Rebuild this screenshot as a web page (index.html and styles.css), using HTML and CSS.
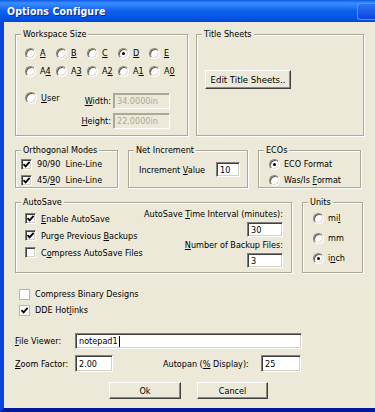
FILE: index.html
```html
<!DOCTYPE html>
<html>
<head>
<meta charset="utf-8">
<link rel="stylesheet" href="styles.css">
</head>
<body>
<div class="window">
  <div class="titlebar">
    <span class="title">Options Configure</span>
    <span class="tb-btn"></span>
  </div>
  <div class="client">
    <div class="row row-top">
      <div class="group g-workspace">
        <div class="legend">Workspace Size</div>
        <div class="radio-grid">
          <div class="opt"><span class="radio"></span><span><u>A</u></span></div>
          <div class="opt"><span class="radio"></span><span><u>B</u></span></div>
          <div class="opt"><span class="radio"></span><span><u>C</u></span></div>
          <div class="opt"><span class="radio on"></span><span><u>D</u></span></div>
          <div class="opt"><span class="radio"></span><span><u>E</u></span></div>
          <div class="opt"><span class="radio"></span><span>A<u>4</u></span></div>
          <div class="opt"><span class="radio"></span><span>A<u>3</u></span></div>
          <div class="opt"><span class="radio"></span><span>A<u>2</u></span></div>
          <div class="opt"><span class="radio"></span><span>A<u>1</u></span></div>
          <div class="opt"><span class="radio"></span><span>A<u>0</u></span></div>
        </div>
        <div class="user-row">
          <div class="opt user-opt"><span class="radio big"></span><span><u>U</u>ser</span></div>
          <span class="flabel"><u>W</u>idth:</span>
          <span class="input disabled w-dim">34.0000in</span>
        </div>
        <div class="height-row">
          <span class="flabel"><u>H</u>eight:</span>
          <span class="input disabled w-dim">22.0000in</span>
        </div>
      </div>
      <div class="group g-title">
        <div class="legend">Title Sheets</div>
        <div class="btn btn-edit">Edit Title Sheets..</div>
      </div>
    </div>

    <div class="row row-mid">
      <div class="group g-ortho">
        <div class="legend">Orthogonal Modes</div>
        <div class="stack s16">
          <div class="opt chk-opt"><span class="check on"><svg viewBox="0 0 9 9" width="9" height="9"><path d="M1.5 4.2 L3.6 6.4 L7.6 1.8" fill="none" stroke="#000" stroke-width="1.8"/></svg></span><span>90/90 &nbsp;Line-Line</span></div>
          <div class="opt chk-opt"><span class="check on"><svg viewBox="0 0 9 9" width="9" height="9"><path d="M1.5 4.2 L3.6 6.4 L7.6 1.8" fill="none" stroke="#000" stroke-width="1.8"/></svg></span><span>45/<u>9</u>0 &nbsp;Line-Line</span></div>
        </div>
      </div>
      <div class="group g-net">
        <div class="legend">Net Increment</div>
        <div class="net-row">
          <span class="net-label">Increment <u>V</u>alue</span>
          <span class="input w-net">10</span>
        </div>
      </div>
      <div class="group g-eco">
        <div class="legend">ECOs</div>
        <div class="stack s16">
          <div class="opt"><span class="radio on"></span><span>ECO Format</span></div>
          <div class="opt"><span class="radio"></span><span>Was/Is <u>F</u>ormat</span></div>
        </div>
      </div>
    </div>

    <div class="row row-auto">
      <div class="group g-auto">
        <div class="legend">AutoSave</div>
        <div class="auto-body">
          <div class="stack s17 auto-left">
            <div class="opt chk-opt"><span class="check on"><svg viewBox="0 0 9 9" width="9" height="9"><path d="M1.5 4.2 L3.6 6.4 L7.6 1.8" fill="none" stroke="#000" stroke-width="1.8"/></svg></span><span><u>E</u>nable AutoSave</span></div>
            <div class="opt chk-opt"><span class="check on"><svg viewBox="0 0 9 9" width="9" height="9"><path d="M1.5 4.2 L3.6 6.4 L7.6 1.8" fill="none" stroke="#000" stroke-width="1.8"/></svg></span><span>Purge Previous <u>B</u>ackups</span></div>
            <div class="opt chk-opt"><span class="check"></span><span>C<u>o</u>mpress AutoSave Files</span></div>
          </div>
          <div class="auto-right">
            <span class="rlabel">AutoSave <u>T</u>ime Interval (minutes):</span>
            <span class="input w-auto">30</span>
            <span class="rlabel"><u>N</u>umber of Backup Files:</span>
            <span class="input w-auto">3</span>
          </div>
        </div>
      </div>
      <div class="group g-units">
        <div class="legend">Units</div>
        <div class="stack s20">
          <div class="opt"><span class="radio"></span><span>mi<u>l</u></span></div>
          <div class="opt"><span class="radio"></span><span>mm</span></div>
          <div class="opt"><span class="radio on"></span><span>i<u>n</u>ch</span></div>
        </div>
      </div>
    </div>

    <div class="stack s16 bottom-checks">
      <div class="opt chk-opt"><span class="check flat"></span><span>Compress Binary Designs</span></div>
      <div class="opt chk-opt"><span class="check flat on"><svg viewBox="0 0 9 9" width="9" height="9"><path d="M1.5 4.2 L3.6 6.4 L7.6 1.8" fill="none" stroke="#000" stroke-width="1.8"/></svg></span><span>DDE Hot<u>l</u>inks</span></div>
    </div>

    <div class="field-row file-row">
      <span class="field-label"><u>F</u>ile Viewer:</span>
      <span class="input w-file">notepad1<span class="caret"></span></span>
    </div>
    <div class="field-row zoom-row">
      <span class="field-label"><u>Z</u>oom Factor:</span>
      <span class="input w-zoom">2.00</span>
      <span class="autopan-label">Autopan (<u>%</u> Display):</span>
      <span class="input w-pan">25</span>
    </div>

    <div class="buttons">
      <div class="btn btn-ok">Ok</div>
      <div class="btn btn-cancel">Cancel</div>
    </div>
  </div>
</div>
</body>
</html>
```

FILE: styles.css
```css
* { box-sizing: border-box; }

body {
  margin: 0;
  background: #ece9d8;
  font-family: "DejaVu Sans Condensed", "Liberation Sans", sans-serif;
  font-size: 9px;
  color: #000;
}

u { text-decoration: underline; text-underline-offset: 1px; }

.window {
  width: 375px;
  height: 412px;
  background: #ece9d8;
  display: flex;
  flex-direction: column;
  overflow: hidden;
}

.titlebar {
  height: 22px;
  flex: none;
  display: flex;
  align-items: center;
  padding-left: 7px;
  background: linear-gradient(#0a5ae6 0, #3a8dff 3px, #2a7cfb 6px, #0c61ee 11px, #0557e8 17px, #0047d4 22px);
}

.title {
  color: #fff;
  font-family: "DejaVu Sans Condensed", "Liberation Sans", sans-serif;
  font-weight: bold;
  font-size: 10.5px;
  text-shadow: 1px 1px 0 #0a2a8a;
  letter-spacing: 0.1px;
}

.tb-btn {
  margin-left: auto;
  width: 18px;
  height: 17px;
  border-radius: 3px 0 0 3px;
  background: linear-gradient(#2f74f5, #0a45dc);
  border: 1px solid #5a92f8;
  border-right: none;
}

.client {
  flex: 1;
  border-left: 4px solid #0a44dc;
  border-bottom: 4px solid #00179c;
  padding-left: 11px;
  display: flex;
  flex-direction: column;
}

.row { display: flex; flex: none; }

.group {
  --pad: 0px;
  padding-left: var(--pad);
  border: 1px solid #aca899;
  box-shadow: inset 1px 1px 0 #fff, 1px 1px 0 #fff;
}

.legend {
  width: max-content;
  height: 12px;
  line-height: 12px;
  margin: -7px 0 0 calc(5px - var(--pad));
  padding: 0 2px;
  background: #ece9d8;
  white-space: nowrap;
}

.opt {
  display: flex;
  align-items: center;
  gap: 4px;
  white-space: nowrap;
}

.chk-opt { gap: 5px; }

/* radio buttons */
.radio {
  flex: none;
  width: 11px;
  height: 11px;
  border-radius: 50%;
  background: #fff;
  border: 1px solid;
  border-color: #8a8878 #fff #fff #8a8878;
  box-shadow: inset 1px 1px 0 #5a5a50, inset -1px -1px 0 #dcdad0;
  position: relative;
}
.radio.big { width: 12px; height: 12px; }
.radio.on::after {
  content: "";
  position: absolute;
  left: 3px;
  top: 3px;
  width: 3px;
  height: 3px;
  border-radius: 50%;
  background: #000;
}

/* checkboxes */
.check {
  flex: none;
  width: 11px;
  height: 11px;
  background: #fff;
  border: 1px solid;
  border-color: #808080 #fff #fff #808080;
  box-shadow: inset 1px 1px 0 #404040, inset -1px -1px 0 #d4d0c8;
  display: flex;
  align-items: center;
  justify-content: center;
}
.check svg { display: block; }
.check.flat {
  border: 1px solid #b8b6a8;
  box-shadow: none;
}

/* inputs */
.input {
  display: flex;
  align-items: center;
  padding-left: 3px;
  height: 16px;
  background: #fff;
  border: 1px solid;
  border-color: #808080 #fff #fff #808080;
  box-shadow: inset 1px 1px 0 #404040, inset -1px -1px 0 #d4d0c8;
  white-space: nowrap;
  flex: none;
}
.input.disabled {
  background: #ece9d8;
  color: #aca899;
  border-color: #aca899 #fff #fff #aca899;
  box-shadow: inset 1px 1px 0 #aca899;
}

.caret {
  display: inline-block;
  width: 1px;
  height: 11px;
  background: #000;
  margin-left: 1px;
}

/* buttons */
.btn {
  display: flex;
  align-items: center;
  justify-content: center;
  background: #ece9d8;
  border: 1px solid;
  border-color: #fff #404040 #404040 #fff;
  box-shadow: inset -1px -1px 0 #8c8a7c;
  white-space: nowrap;
  flex: none;
}

/* top row */
.row-top { margin-top: 12px; height: 102px; gap: 8px; }

.g-workspace { width: 173px; --pad: 9px; }

.radio-grid {
  display: grid;
  grid-template-columns: repeat(5, 31px);
  grid-auto-rows: 18px;
  margin-top: 4px;
}

.user-row {
  display: flex;
  align-items: center;
  margin-top: 12px;
  height: 17px;
}
.user-opt { width: 52px; align-self: flex-start; }

.flabel {
  width: 34px;
  text-align: right;
  margin-right: 2px;
  flex: none;
}

.height-row {
  display: flex;
  align-items: center;
  margin-top: 4px;
  height: 16px;
  padding-left: 52px;
}

.w-dim { width: 57px; height: 16px; }

.g-title { width: 168px; }
.btn-edit { width: 86px; height: 19px; margin: 30px 0 0 8px; font-size: 9.5px; }

/* middle row */
.row-mid { margin-top: 14px; height: 38px; gap: 10px; }

.stack { display: flex; flex-direction: column; }
.s16 > * { height: 16px; }
.s17 > * { height: 17px; }
.s20 > * { height: 20px; }

.g-ortho { width: 103px; --pad: 5px; }

.g-net { width: 120px; --pad: 10px; }
.net-row { display: flex; align-items: center; margin-top: 6px; height: 15px; }
.net-label { width: 77px; white-space: nowrap; }
.w-net { width: 24px; height: 15px; }

.g-eco { width: 103px; --pad: 10px; }

/* autosave row */
.row-auto { margin-top: 14px; height: 71px; gap: 10px; }

.g-auto { width: 277px; --pad: 9px; padding-right: 8px; }
.auto-body { display: flex; justify-content: space-between; }
.auto-left { margin-top: 2px; }
.auto-right {
  display: flex;
  flex-direction: column;
  align-items: flex-end;
}
.rlabel { height: 12px; line-height: 12px; white-space: nowrap; }
.w-auto { width: 36px; height: 15px; margin: 2px 0; }

.g-units { width: 61px; --pad: 10px; }

/* bottom */
.bottom-checks { margin-top: 13px; margin-left: 4px; flex: none; }

.field-row { display: flex; align-items: center; flex: none; }
.field-label { width: 60px; white-space: nowrap; }

.file-row { margin-top: 15px; height: 16px; }
.w-file { width: 227px; height: 16px; }

.zoom-row { margin-top: 6px; height: 17px; }
.w-zoom { width: 38px; height: 17px; }
.autopan-label { margin-left: 50px; width: 98px; white-space: nowrap; }
.w-pan { width: 40px; height: 17px; }

.buttons {
  display: flex;
  gap: 16px;
  margin-top: 10px;
  padding-left: 94px;
  flex: none;
}
.btn-ok { width: 72px; height: 17px; }
.btn-cancel { width: 71px; height: 17px; }
```
